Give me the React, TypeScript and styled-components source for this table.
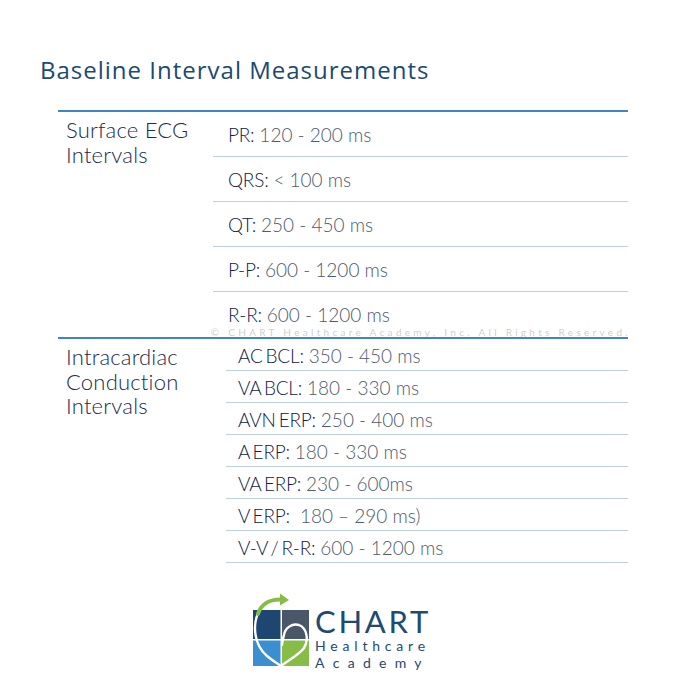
import styled, { createGlobalStyle } from 'styled-components';

const GlobalStyle = createGlobalStyle`
    body {
        margin: 0;
        background: #ffffff;
        font-family: Lato, "Noto Sans", sans-serif;
    }
`

type Row = { key: string; value: string }

const surface: Row[] = [
    { key: 'PR:', value: '120 - 200 ms' },
    { key: 'QRS:', value: '< 100 ms' },
    { key: 'QT:', value: '250 - 450 ms' },
    { key: 'P-P:', value: '600 - 1200 ms' },
    { key: 'R-R:', value: '600 - 1200 ms' },
]

const intracardiac: Row[] = [
    { key: 'AC BCL:', value: '350 - 450 ms' },
    { key: 'VA BCL:', value: '180 - 330 ms' },
    { key: 'AVN ERP:', value: '250 - 400 ms' },
    { key: 'A ERP:', value: '180 - 330 ms' },
    { key: 'VA ERP:', value: '230 - 600ms' },
    { key: 'V ERP:', value: '\u00a0180 \u2013 290 ms)' },
    { key: 'V-V / R-R:', value: '600 - 1200 ms' },
]

function Logo () {
    return (
        <LogoWrap>
            <svg width="60" height="78" viewBox="0 0 60 78">
                <rect x="4" y="17" width="27.5" height="29" fill="#1d4770" />
                <rect x="33" y="17" width="28" height="29" fill="#4a5769" />
                <rect x="4" y="47.5" width="27.5" height="25.5" fill="#3b8fd0" />
                <rect x="33" y="47.5" width="28" height="25.5" fill="#86bd47" />
                {/* heart curl */}
                <path d="M10,18 C3,32 5,52 18,63 C24,68 29,71 32,73 C38,68 50,62 55,55 C60,47 58,35 50,32 C43,30 36,35 35,42 C34,46 33,49 33,52"
                    fill="none" stroke="#ffffff" strokeWidth="2.4" strokeLinecap="round" />
                {/* arrow */}
                <path d="M9,21 C12,11 21,6 33,6.5" fill="none" stroke="#86bd47" strokeWidth="4" strokeLinecap="round" />
                <polygon points="31,0.5 40,7 31,12.5" fill="#86bd47" />
            </svg>
            <LogoText>
                <Brand>CHART</Brand>
                <BrandSub $spacing={4.8}>Healthcare</BrandSub>
                <BrandSub $spacing={8.3}>Academy</BrandSub>
            </LogoText>
        </LogoWrap>
    )
}

function App () {
    return (<>
        <GlobalStyle />
        <Page>
            <Title>Baseline Interval Measurements</Title>
            <Table>
                <Section $labelWidth={155}>
                    <Label>Surface ECG<br />Intervals</Label>
                    <Rows>
                        {surface.map((r, i) => (
                            <RowItem key={r.key} $height={45} $pad={15} $last={i === surface.length - 1}>
                                <Line><Key>{r.key}</Key> <Value>{r.value}</Value></Line>
                            </RowItem>
                        ))}
                    </Rows>
                    <Watermark>© CHART Healthcare Academy, Inc. All Rights Reserved.</Watermark>
                </Section>
                <Section $labelWidth={168}>
                    <Label>Intracardiac<br />Conduction<br />Intervals</Label>
                    <Rows>
                        {intracardiac.map((r) => (
                            <RowItem key={r.key} $height={32} $pad={12} $last={false}>
                                <Line><Key>{r.key}</Key> <Value>{r.value}</Value></Line>
                            </RowItem>
                        ))}
                    </Rows>
                </Section>
            </Table>
            <Logo />
        </Page>
    </>)
}

let Page = styled.div`
    width: 680px;
    height: 680px;
    box-sizing: border-box;
    padding: 55px 52px 0 40px;
    overflow: hidden;
`
let Title = styled.h1`
    margin: 0;
    font-family: "Open Sans", "Noto Sans", sans-serif;
    font-weight: 400;
    font-size: 24px;
    line-height: 30px;
    color: #1b4a72;
    letter-spacing: 1px;
`
let Table = styled.div`
    margin: 25px 0 0 18px;
    width: 570px;
`
let Section = styled.div<{ $labelWidth: number }>`
    position: relative;
    display: grid;
    grid-template-columns: ${p => p.$labelWidth}px 1fr;
    border-top: 2px solid #3f85c2;
`
let Label = styled.div`
    padding: 6px 0 0 8px;
    font-size: 22px;
    font-weight: 300;
    line-height: 24.5px;
    color: #182c4c;
    letter-spacing: 0.2px;
`
let Rows = styled.div`
    display: flex;
    flex-direction: column;
`
let RowItem = styled.div<{ $height: number; $pad: number; $last: boolean }>`
    display: flex;
    align-items: center;
    height: ${p => p.$height}px;
    box-sizing: border-box;
    padding: ${p => p.$last ? '0' : '1px'} 0 0 ${p => p.$pad}px;
    border-bottom: ${p => p.$last ? 'none' : '1px solid #bccfe3'};
`
let Line = styled.span`
    font-size: 19px;
    white-space: pre;
`
let Key = styled.span`
    color: #0f2046;
    font-weight: 300;
    word-spacing: -2px;
    letter-spacing: -0.2px;
`
let Value = styled.span`
    color: #4d5b70;
    font-weight: 300;
`
let Watermark = styled.div`
    position: absolute;
    right: 0;
    bottom: 0;
    font-size: 10px;
    line-height: 10px;
    letter-spacing: 3.3px;
    margin-right: -3px;
    color: #cfcfcf;
    white-space: nowrap;
`
let LogoWrap = styled.div`
    display: flex;
    justify-content: center;
    align-items: flex-start;
    gap: 6px;
    margin-top: 30px;
    padding-left: 12px;
`
let LogoText = styled.div`
    display: flex;
    flex-direction: column;
    margin-top: 13px;
    color: #1f4a72;
`
let Brand = styled.div`
    font-size: 31px;
    line-height: 31px;
    letter-spacing: 2.7px;
`
let BrandSub = styled.div<{ $spacing: number }>`
    font-size: 14px;
    line-height: 17px;
    letter-spacing: ${p => p.$spacing}px;
`
export default App;
